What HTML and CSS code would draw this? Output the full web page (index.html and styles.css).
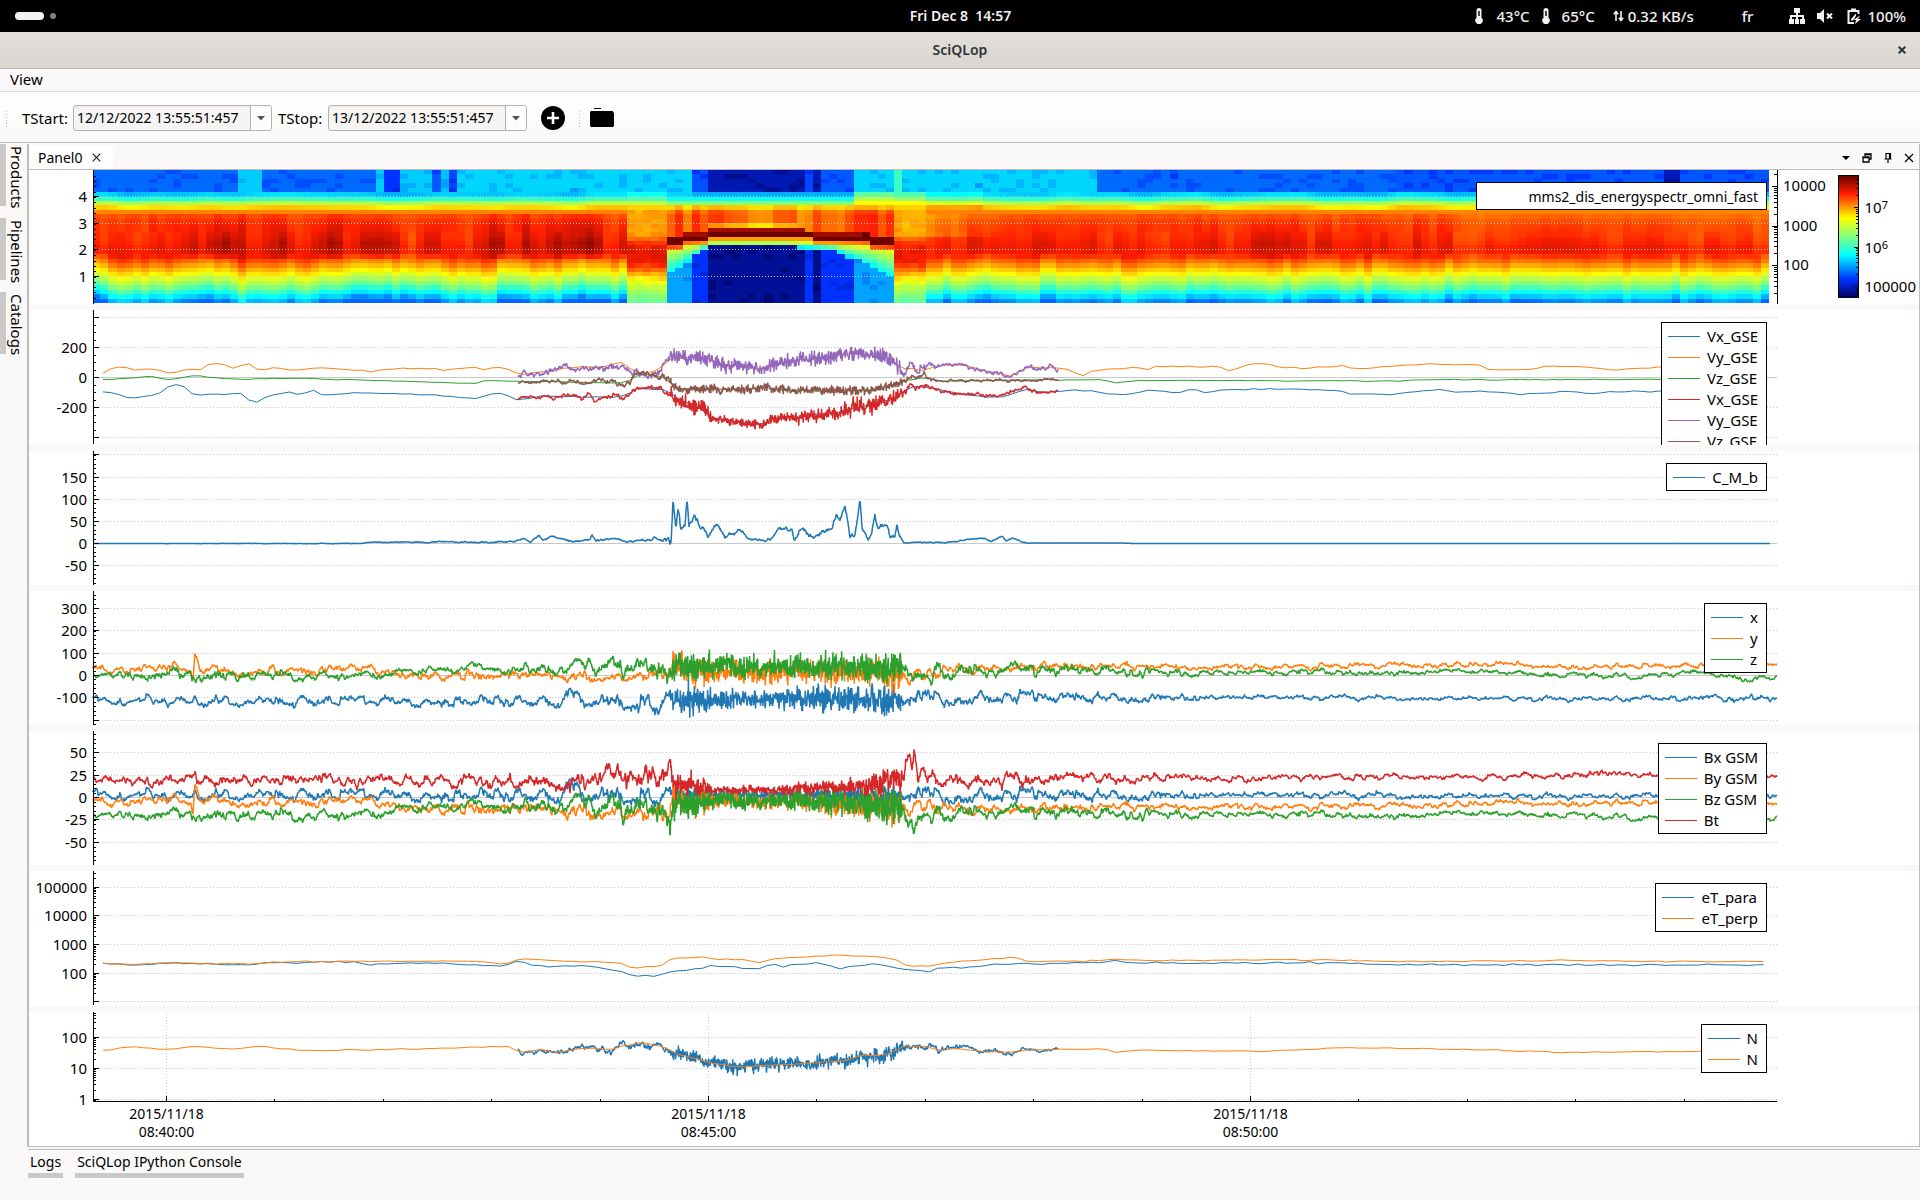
FILE: index.html
```html
<!DOCTYPE html>
<html lang="en">
<head>
<meta charset="utf-8">
<title>SciQLop</title>
<link rel="stylesheet" href="styles.css">
</head>
<body>
<header class="topbar">
  <div class="workspaces"><span class="pill"></span><span class="dot"></span></div>
  <time class="clock">Fri Dec 8&nbsp; 14:57</time>
  <div class="tray">
    <svg class="thermo" width="8" height="16" viewBox="0 0 8 16"><path d="M1.5 2.5a2.5 2.5 0 0 1 5 0v7.3a3.7 3.7 0 1 1-5 0z" fill="#f2f2f2"/><path d="M4 3v5" stroke="#000" stroke-width="1.4"/></svg>
    <span class="temp">43°C</span>
    <svg class="thermo" width="8" height="16" viewBox="0 0 8 16"><path d="M1.5 2.5a2.5 2.5 0 0 1 5 0v7.3a3.7 3.7 0 1 1-5 0z" fill="#f2f2f2"/><path d="M4 3v5" stroke="#000" stroke-width="1.4"/></svg>
    <span class="temp">65°C</span>
    <span class="net"><svg width="11" height="12" viewBox="0 0 11 12"><path d="M3 11V2M.8 4.2L3 1.5l2.2 2.7M8 1v9M5.800 7.800L8 10.500l2.200-2.700" fill="none" stroke="#f2f2f2" stroke-width="1.600"/></svg>0.32 KB/s</span>
    <span class="lang">fr</span>
    <svg class="lan" width="16" height="16" viewBox="0 0 16 16"><path d="M5 0h6v5H9v2h6v4h1v5h-5v-5h2V9H9v2h1v5H6v-5h1V9H3v2h2v5H0v-5h1V7h6V5H5z" fill="#f2f2f2"/></svg>
    <svg class="mute" width="16" height="14" viewBox="0 0 16 14"><path d="M0 4h3l4-4v14l-4-4H0z" fill="#f2f2f2"/><path d="M10 4.500l5 5m0-5l-5 5" stroke="#f2f2f2" stroke-width="2"/></svg>
    <svg class="battery" width="14" height="16" viewBox="0 0 14 16"><path d="M11.500 6V3h-10v12H7M4 1.500h5" fill="none" stroke="#f2f2f2" stroke-width="2"/><path d="M4 11l5-5.500V8l-3 4.500H4zM13 7.500L6.500 12H9l-1 4 6-5h-3z" fill="#f2f2f2"/></svg>
    <span>100%</span>
  </div>
</header>
<div class="titlebar">
  <h1>SciQLop</h1>
  <button class="close" aria-label="Close"><svg width="8" height="8" viewBox="0 0 8 8"><path d="M.7.700l6.600 6.600m0-6.600L.7 7.300" stroke="#2e3436" stroke-width="2"/></svg></button>
</div>
<nav class="menubar"><button>View</button></nav>
<div class="toolbar">
  <span class="grip"></span>
  <label for="tstart">TStart:</label>
  <div class="combo"><input id="tstart" type="text" value="12/12/2022 13:55:51:457"><button aria-label="Open calendar"><svg width="8" height="5" viewBox="0 0 8 5"><path d="M0 0h8L4 4.500z" fill="#555"/></svg></button></div>
  <label for="tstop">TStop:</label>
  <div class="combo"><input id="tstop" type="text" value="13/12/2022 13:55:51:457"><button aria-label="Open calendar"><svg width="8" height="5" viewBox="0 0 8 5"><path d="M0 0h8L4 4.500z" fill="#555"/></svg></button></div>
  <button class="tool add" aria-label="Add"><svg width="24" height="24" viewBox="0 0 24 24"><circle cx="12" cy="12" r="12"/><path d="M12 6v12M6 12h12" stroke="#fff" stroke-width="2.600"/></svg></button>
  <span class="grip"></span>
  <button class="tool" aria-label="Open"><svg width="24" height="20" viewBox="0 0 24 20"><path d="M4 0h7v1H4zM1 3h22v1l1 1v13l-1 1H1l-1-1V4z"/></svg></button>
</div>
<main class="workspace">
  <aside class="sidetabs"><button>Products</button><button>Pipelines</button><button>Catalogs</button></aside>
  <section class="dock">
    <div class="tabs">
      <div class="tab"><span>Panel0</span><button aria-label="Close tab"><svg width="9" height="9" viewBox="0 0 9 9"><path d="M.7.700l7.600 7.600m0-7.600L.7 8.300" stroke="#222" stroke-width="1.200"/></svg></button></div>
      <div class="dockbuttons">
        <button aria-label="Tabs menu"><svg width="10" height="10" viewBox="0 0 10 10"><path d="M1 3h8L5 7z"/></svg></button>
        <button aria-label="Detach"><svg width="10" height="10" viewBox="0 0 10 10"><path d="M3 3V1h6v5H7M1 4h6v5H1zM3 1.500h6M1 4.500h6" fill="none" stroke="#000" stroke-width="1.300"/></svg></button>
        <button aria-label="Pin"><svg width="10" height="10" viewBox="0 0 10 10"><path d="M3 .5h4.500v5.500M3 0v6M6.500 0v6M1.500 6h7M5 6v4" fill="none" stroke="#000" stroke-width="1.200"/></svg></button>
        <button aria-label="Close panel"><svg width="10" height="10" viewBox="0 0 10 10"><path d="M1 1l8 8m0-8L1 9" stroke="#000" stroke-width="1.200"/></svg></button>
      </div>
    </div>
    <div class="plots">
      <div class="plot" data-plot="spectro"><ul class="legend nokey"><li>mms2_dis_energyspectr_omni_fast</li></ul></div>
      <div class="plot" data-plot="velocity"><ul class="legend"><li class="c1">Vx_GSE</li><li class="c2">Vy_GSE</li><li class="c3">Vz_GSE</li><li class="c4">Vx_GSE</li><li class="c5">Vy_GSE</li><li class="c6">Vz_GSE</li></ul></div>
      <div class="plot" data-plot="cmb"><ul class="legend"><li class="c1">C_M_b</li></ul></div>
      <div class="plot" data-plot="xyz"><ul class="legend"><li class="c1">x</li><li class="c2">y</li><li class="c3">z</li></ul></div>
      <div class="plot" data-plot="gsm"><ul class="legend"><li class="c1">Bx GSM</li><li class="c2">By GSM</li><li class="c3">Bz GSM</li><li class="c4">Bt</li></ul></div>
      <div class="plot" data-plot="temp"><ul class="legend"><li class="c1">eT_para</li><li class="c2">eT_perp</li></ul></div>
      <div class="plot" data-plot="density"><ul class="legend"><li class="c1">N</li><li class="c2">N</li></ul></div>
    </div>
  </section>
</main>
<footer class="bottomtabs"><button>Logs</button><button>SciQLop IPython Console</button></footer>
<script src="plots.js"></script>
</body>
</html>
```
FILE: styles.css
```css
* { box-sizing: border-box; }
body {
  margin: 0;
  min-height: 100vh;
  display: flex;
  flex-direction: column;
  background: #faf9f7;
  color: #000;
  font: 15px/20px "Noto Sans", "Open Sans", sans-serif;
}
button { border: 0; padding: 0; background: none; font: inherit; color: inherit; }
svg { display: block; flex: none; }

.topbar {
  display: grid;
  grid-template-columns: 1fr auto 1fr;
  align-items: center;
  height: 32px;
  padding: 0 14px 0 15px;
  background: #000;
  color: #f2f2f2;
  font-weight: 500;
}
.clock { font-weight: 600; font-size: 14px; }
.workspaces { display: flex; align-items: center; gap: 6px; }
.pill { width: 29px; height: 8px; border-radius: 4px; background: #f2f2f2; }
.dot { width: 6px; height: 6px; border-radius: 3px; background: #808080; }
.tray { display: flex; align-items: center; justify-content: flex-end; }
.temp { margin: 0 12px; }
.net { display: flex; align-items: center; gap: 4px; margin: 0 48px 0 6px; }
.lang { margin-right: 36px; }
.lan { margin-right: 12px; }
.mute { margin-right: 14px; }
.battery { margin-right: 6px; }
.thermo:first-child { margin-right: 2px; }

.titlebar {
  display: grid;
  grid-template-columns: 1fr auto 1fr;
  align-items: center;
  height: 37px;
  padding: 0 14px;
  background: linear-gradient(#e1dedb, #d9d6d2);
  border-bottom: 1px solid #bfb8b1;
}
.titlebar h1 { grid-column: 2; margin: 0; font-size: 14px; line-height: 20px; font-weight: 600; color: #2e3436; }
.close { justify-self: end; }

.menubar { display: flex; align-items: flex-start; height: 23px; padding: 0 10px; border-bottom: 1px solid #dcdcdb; }
.toolbar {
  display: flex;
  align-items: center;
  height: 51px;
  padding: 2px 5px 0;
  background: linear-gradient(#fff, #faf9f8);
  border-bottom: 1px solid #bdbbb9;
}
.grip { width: 4px; height: 17px; margin-right: 13px; background: radial-gradient(circle, #bbb 1px, transparent 1px) 0 0 / 3px 3px; }
.toolbar label { width: 51px; }
.combo { display: flex; width: 199px; height: 26px; margin-right: 6px; border: 1px solid #b4b2b0; border-radius: 3px; background: linear-gradient(#efeeed, #f6f5f4 4px); }
.combo + label { width: 50px; }
.combo input { flex: 1; min-width: 0; padding: 0 3px; border: 0; background: none; font: inherit; font-size: 14px; }
.combo button { display: grid; place-items: center; width: 21px; border-left: 1px solid #b4b2b0; background: #fdfdfd; border-radius: 0 3px 3px 0; }
.tool { margin-right: 13px; }
.add { margin-left: 8px; }
.tool + .grip { margin-right: 8px; }

.workspace { flex: 1; display: flex; margin-top: 1px; }
.sidetabs { display: flex; flex-direction: column; align-items: stretch; width: 27px; gap: 12px; }
.sidetabs button {
  writing-mode: vertical-rl;
  height: 62px;
  padding-top: 2px;
  border-left: 6px solid #cac9c7;
  line-height: 16px;
  text-align: center;
  white-space: nowrap;
}
.dock { flex: 1; display: flex; flex-direction: column; margin-bottom: 2px; border: solid #bfbdbb; border-width: 0 1px 1px 2px; }
.tabs { display: flex; justify-content: space-between; align-items: center; height: 26px; padding-top: 2px; border-bottom: 1px solid #bfbdbb; }
.tab { display: flex; align-items: center; gap: 9px; width: 84px; height: 23px; padding-left: 9px; background: #fff; font-size: 14px; }
.dockbuttons { display: flex; gap: 11px; padding-right: 5px; }
.plots { flex: 1; display: flex; flex-direction: column; gap: 6px; min-height: 700px; }
.plot { position: relative; flex: 1; overflow: hidden; background: #fff; }
.plot > svg { position: absolute; inset: 0; width: 100%; height: 100%; }
.plot text { font-size: 15px; }
.plot .date { font-size: 14px; }
.plot .sup { font-size: 11px; }
.grid { stroke: #c8c8c8; stroke-dasharray: 1 2; fill: none; }
.zero { stroke: #c8c8c8; fill: none; }
.axis { stroke: #000; fill: none; }
.curve { fill: none; stroke-linejoin: bevel; }

.legend {
  position: absolute;
  z-index: 1;
  top: 12px;
  right: 152px;
  margin: 0;
  padding: 3px 8px 2px 6px;
  border: 1px solid #000;
  background: #fff;
  list-style: none;
}
.legend li { display: flex; align-items: center; gap: 7px; line-height: 21px; white-space: nowrap; }
.legend li::before { content: ""; width: 32px; border-top: 1px solid var(--key); }
.nokey li { font-size: 14px; }
.nokey li::before { width: 38px; visibility: hidden; }
.c1 { --key: #1f77b4; }
.c2 { --key: #ff7f0e; }
.c3 { --key: #2ca02c; }
.c4 { --key: #d62728; }
.c5 { --key: #9467bd; }
.c6 { --key: #8c564b; }

.bottomtabs { display: flex; align-items: flex-start; gap: 12px; height: 51px; margin-left: 28px; border-top: 1px solid #bfbdbb; }
.bottomtabs button { height: 28px; padding: 0 2px; border-bottom: 5px solid #cac9c7; font-size: 14px; line-height: 20px; }
```
FILE: plots.js
```js
const NS = "http://www.w3.org/2000/svg";
const BLUE = "#1f77b4", ORANGE = "#ff7f0e", GREEN = "#2ca02c", RED = "#d62728", PURPLE = "#9467bd", BROWN = "#8c564b";

// Plot area, relative to a row: left axis and the room kept for the colour scale.
const LEFT = 64, RIGHT = 142, SPAN = 1684, ROW = 134;
// Series are sampled on a time base that runs from T0 to T0 + SPAN.
const T0 = 93;

function rng(seed) {
  let s = seed >>> 0;
  return () => {
    s = (s + 0x6d2b79f5) >>> 0;
    let t = Math.imul(s ^ (s >>> 15), 1 | s);
    t = (t + Math.imul(t ^ (t >>> 7), 61 | t)) ^ t;
    return ((t ^ (t >>> 14)) >>> 0) / 4294967296;
  };
}
function at(k, x) {
  if (x <= k[0]) return k[1];
  for (let i = 2; i < k.length; i += 2)
    if (x <= k[i]) return k[i - 1] + (k[i + 1] - k[i - 1]) * (x - k[i - 2]) / (k[i] - k[i - 2]);
  return k[k.length - 1];
}
function slow(seed, period) {
  const r = rng(seed), v = [];
  for (let i = 0; i < 2200 / period + 2; i++) v.push(r() * 2 - 1);
  return x => {
    const p = x / period, i = Math.floor(p), f = p - i, e = f * f * (3 - 2 * f);
    return v[i] * (1 - e) + v[i + 1] * e;
  };
}
function el(parent, name, attrs, text) {
  const e = document.createElementNS(NS, name);
  for (const k in attrs) e.setAttribute(k, attrs[k]);
  if (text !== undefined) e.textContent = text;
  parent.appendChild(e);
  return e;
}

const vx = [104,-95,120,-115,128,-135,140,-135,160,-100,170,-55,176,-50,185,-60,193,-115,225,-110,240,-105,250,-160,258,-162,265,-130,290,-95,300,-120,315,-85,323,-120,350,-100,420,-115,440,-120,478,-140,495,-105,505,-115,519,-150,540,-125,600,-130,620,-130,640,-70,665,-80,680,-150,705,-220,712,-275,760,-315,775,-275,830,-240,850,-210,890,-150,908,-70,920,-60,960,-110,1000,-135,1025,-75,1040,-100,1080,-85,1120,-115,1137,-108,1150,-85,1180,-100,1194,-70,1202,-100,1230,-80,1265,-75,1340,-85,1350,-110,1390,-115,1438,-80,1460,-105,1475,-90,1520,-110,1570,-90,1590,-110,1610,-95,1661,-90,1777,-95];
const vy = [104,30,115,70,122,75,136,50,150,60,170,30,185,50,200,50,210,95,226,80,234,55,243,90,251,90,259,40,275,65,298,45,323,70,345,55,372,38,398,60,425,60,447,50,470,72,486,48,495,68,505,65,519,20,530,25,550,45,570,65,600,70,622,100,634,40,650,30,660,60,672,130,706,130,720,90,760,60,790,110,850,155,885,145,901,65,925,50,940,85,965,80,990,40,1010,10,1025,65,1055,68,1072,45,1080,5,1088,40,1105,55,1130,60,1137,80,1145,40,1153,75,1220,72,1227,45,1250,90,1268,92,1282,62,1330,65,1341,80,1355,55,1420,90,1479,85,1487,52,1535,55,1545,78,1590,70,1610,50,1661,70,1777,70];
const vz = [104,-12,115,-14,135,0,150,10,170,-15,193,10,240,-10,300,-5,350,-15,400,-25,478,-40,486,-20,520,-25,600,-35,625,-35,640,20,660,15,680,-80,750,-78,765,-60,775,-85,850,-90,880,-80,905,-20,925,0,940,-25,1040,-15,1105,-15,1113,-35,1140,-20,1250,-20,1390,-25,1430,-15,1777,-12];
const cmb = [94,0,360,0,370,3,505,3,515,6,524,12,530,5,539,17,543,6,550,15,560,10,570,5,590,8,592,18,596,5,610,8,618,12,625,4,650,6,655,13,662,4,668,12,671,5,673,103,676,40,678,75,681,38,685,45,687,98,689,40,694,60,697,55,700,35,702,42,708,22,717,40,725,16,735,22,739,30,750,12,765,7,774,14,778,32,792,33,794,12,801,33,812,18,832,34,836,58,840,50,845,83,850,20,855,22,860,92,862,35,868,13,872,25,875,60,877,33,888,40,890,15,895,20,897,45,899,22,904,2,955,3,968,10,985,12,992,4,1002,16,1006,5,1013,12,1028,1,1120,1,1140,0,1777,0];
const tPara = [104,2.36,130,2.3,170,2.35,250,2.32,275,2.38,350,2.42,372,2.3,420,2.4,500,2.25,519,2.42,540,2.25,590,2.25,620,2.1,633,1.92,657,1.9,672,2.1,700,2.15,714,2.3,722,2.22,730,2.28,740,2.18,762,2.2,772,2.36,787,2.2,795,2.4,804,2.22,812,2.38,830,2.3,844,2.12,852,2.34,860,2.18,870,2.38,900,2.15,920,2.1,926,2,935,2.18,975,2.22,990,2.32,1100,2.38,1113,2.46,1125,2.38,1145,2.35,1300,2.38,1420,2.3,1770,2.3];
const tPerp = [104,2.36,130,2.3,170,2.37,250,2.33,275,2.4,350,2.43,480,2.43,505,2.32,519,2.52,550,2.45,600,2.4,622,2.37,633,2.17,665,2.3,672,2.54,705,2.58,720,2.48,740,2.5,762,2.37,771,2.52,840,2.65,890,2.56,908,2.26,930,2.27,940,2.35,985,2.5,1015,2.58,1030,2.4,1100,2.45,1113,2.52,1125,2.46,1190,2.46,1280,2.48,1420,2.42,1560,2.46,1620,2.42,1770,2.42];
const dens = [104,1.6,130,1.7,170,1.62,193,1.7,235,1.63,258,1.73,300,1.58,420,1.63,490,1.7,510,1.7,520,1.52,540,1.6,560,1.52,580,1.65,610,1.62,640,1.85,665,1.7,675,1.5,708,1.2,738,1.05,800,1.15,845,1.25,862,1.43,870,1.38,893,1.5,901,1.72,925,1.72,940,1.57,955,1.65,985,1.55,1015,1.52,1025,1.6,1105,1.64,1113,1.53,1140,1.6,1250,1.55,1340,1.66,1420,1.65,1560,1.53,1690,1.54,1710,1.6,1770,1.6];

// base: value keys, amp: noise keys, rough: share of sample-to-sample noise.
const fine = (color, base, amp, seed, rough = [0, .45]) => ({ color, base, amp, seed, rough, from: 93, to: 1777, step: .35, w: 1.5, gain: 1.3 });
const burst = (color, base, amp, seed) => ({ color, base, amp, seed, rough: [518, .55, 665, .65, 672, 1, 900, 1, 910, .6], from: 518, to: 1058, step: .4, w: 1.4, gain: 1.25 });
const thin = (color, base, amp, seed) => ({ color, base, amp: [0, amp], seed, rough: [0, .5], from: 103, to: 1768, step: 8.1, w: 1, gain: 1 });
const turb = [0, .5, 668, .5, 674, 1, 900, 1, 906, .5];

const PLOTS = {
  velocity: {
    ticks: [[7, ""], [37, "200"], [67, "0"], [97, "-200"], [127, ""]], minor: 7.5, zero: 67, y: v => 67 - v * .15,
    series: [thin(BLUE, vx, 8, 1), thin(ORANGE, vy, 8, 2), thin(GREEN, vz, 5, 3),
      burst(PURPLE, vy, [518, 34, 640, 45, 665, 50, 675, 65, 720, 58, 760, 42, 850, 70, 900, 60, 925, 60, 935, 24, 1000, 24, 1058, 30], 15),
      burst(BROWN, vz, [518, 18, 640, 40, 665, 45, 680, 36, 900, 38, 930, 40, 940, 13, 1058, 18], 16),
      burst(RED, vx, [518, 22, 640, 34, 672, 45, 690, 80, 708, 70, 714, 32, 770, 42, 820, 58, 860, 75, 900, 52, 940, 24, 1058, 24], 14)]
  },
  cmb: {
    ticks: [[3, ""], [26, "150"], [48, "100"], [70, "50"], [92, "0"], [114, "-50"]], minor: 4.4, zero: 92, y: v => 92 - v * .44,
    series: [{ ...fine(BLUE, cmb, [94, .3, 360, 1, 500, 3, 660, 5, 672, 16, 720, 9, 760, 4, 800, 9, 895, 10, 905, 2, 1020, 3, 1030, .3], 21, [0, .7]), to: 1770 }]
  },
  xyz: {
    ticks: [[17, "300"], [39, "200"], [62, "100"], [84, "0"], [106, "-100"], [129, ""]], minor: 4.45, zero: 84, y: v => 84 - v * .223,
    series: [
      fine(BLUE, [93,-112,210,-112,240,-130,260,-112,520,-112,660,-115,680,-103,900,-105,960,-97,1777,-103], [93,20,200,26,450,30,600,42,668,60,674,76,704,76,712,46,770,46,790,62,900,74,906,50,950,36,1090,32,1200,18,1400,13,1560,15,1777,18], 31, turb),
      fine(ORANGE, [93,30,191,30,193,-20,195,110,200,20,370,30,385,0,620,-5,674,20,880,15,890,-5,930,-10,940,15,960,30,1050,45,1200,38,1370,42,1500,50,1590,38,1777,50], [93,22,190,26,260,28,600,28,668,45,674,72,704,72,712,55,860,60,900,75,906,45,950,28,1200,18,1777,14], 32, turb),
      fine(GREEN, [93,0,370,0,400,20,462,25,473,65,485,30,560,20,580,40,640,20,668,0,674,38,900,35,912,5,930,-15,935,20,1100,22,1180,12,1430,15,1500,15,1560,0,1640,-5,1690,10,1735,2,1750,-28,1760,-8,1777,-8], [93,22,190,36,260,26,450,22,580,40,620,54,674,72,704,72,712,60,900,66,906,58,950,42,1080,34,1200,18,1777,14], 33, turb)]
  },
  gsm: {
    ticks: [[21, "50"], [44, "25"], [66, "0"], [88, "-25"], [111, "-50"]], minor: 4.5, zero: 66, y: v => 66 - v * .895,
    series: [
      fine(BLUE, [93,3,210,3,240,-1,260,4,900,3,1777,2], [93,6,450,9,600,13,674,13,710,8,780,7,900,12,950,10,1100,9,1200,5,1777,4], 31, turb),
      fine(ORANGE, [93,-4,191,-4,193,-18,195,18,200,-4,370,-4,385,-12,600,-15,668,-15,674,-8,710,-4,780,-4,890,-12,950,-13,1100,-10,1400,-10,1500,-6,1777,-7], [93,6,450,8,600,11,674,18,704,16,712,9,780,9,850,14,900,20,906,11,950,8,1200,5,1777,4], 32, turb),
      fine(GREEN, [93,-20,370,-19,400,-11,462,-11,473,0,485,-10,560,-12,580,-7,600,-13,640,-18,668,-22,670,-40,672,-10,712,-4,800,-4,890,-9,904,-16,906,-30,912,-24,914,-36,918,-24,930,-20,960,-16,1100,-18,1400,-20,1500,-18,1640,-23,1777,-23], [93,6,190,8,450,7,590,13,620,19,674,19,704,17,712,11,780,13,900,20,920,14,950,10,1100,9,1200,5,1777,4], 33, turb),
      fine(RED, [93,20,191,20,195,28,197,12,200,20,560,18,600,22,650,28,668,28,670,45,673,16,704,12,712,8,780,8,880,15,895,20,904,18,906,38,912,32,914,50,918,28,960,20,1100,20,1250,22,1400,24,1500,22,1620,26,1777,24], [93,6,190,8,450,8,590,14,620,19,670,21,674,16,704,14,712,5,780,6,850,10,890,18,904,15,930,13,960,10,1100,8,1200,5,1777,4], 34, turb)]
  },
  temp: {
    ticks: [[16, "100000"], [44, "10000"], [73, "1000"], [102, "100"], [130, ""]], decade: 28.6, y: v => 102 - (v - 2) * 28.6,
    series: [thin(BLUE, tPara, .05, 51), thin(ORANGE, tPerp, .035, 52)]
  },
  density: {
    ticks: [[25, "100"], [56, "10"], [87, "1"]], decade: 31, y: v => 56 - (v - 1) * 31, time: true,
    series: [burst(BLUE, dens, [518, .15, 600, .17, 672, .26, 850, .27, 900, .3, 935, .18, 1058, .08], 61), thin(ORANGE, dens, .03, 62)]
  },
  spectro: {
    ticks: [[26, "4"], [53, "3"], [79, "2"], [106, "1"]], minor: 5.3, spectro: true, series: []
  }
};

function samples(s) {
  if (s.pts) return s.pts;
  const r = rng(s.seed * 7919), a = slow(s.seed * 31 + 5, 7), b = slow(s.seed * 53 + 9, 3), c = slow(s.seed * 17 + 3, 1.2), out = [];
  for (let x = s.from; x <= s.to; x += s.step) {
    const k = at(s.rough, x), u = r() + r() + r() - 1.5;
    const smooth = (a(x) * .5 + b(x) * .35 + c(x) * .3) * (1 - k * .55) * (k > .9 ? .5 : 1.3);
    out.push([x, at(s.base, x) + at(s.amp, x) * s.gain * (smooth + u * (k > .9 ? .68 : k * .35))]);
  }
  return (s.pts = out);
}

const JET = [[0, 0, 0, 100], [.15, 0, 50, 255], [.35, 0, 255, 255], [.65, 255, 255, 0], [.85, 255, 30, 0], [1, 100, 0, 0]];
function jet(v) {
  v = Math.min(1, Math.max(0, v));
  for (let i = 1; i < JET.length; i++) if (v <= JET[i][0]) {
    const p = JET[i - 1], q = JET[i], f = (v - p[0]) / (q[0] - p[0]);
    return `rgb(${[1, 2, 3].map(n => Math.round(p[n] + (q[n] - p[n]) * f))})`;
  }
}
// Background level of the highest energies: start of each interval and its level.
const SKY = [[0, .205], [238, .3], [262, .205], [375, .3], [383, .15], [399, .3], [432, .19], [440, .29], [448, .17], [456, .31], [691, .18], [707, .075], [804, .17], [812, .08], [820, .19], [853, .31], [893, .42], [901, .31], [1096, .205], [1400, .185], [1663, .08], [1679, .185]];
const PIT = [[0, .26], [691, .15], [707, .05], [804, .15], [812, .04], [820, .15], [853, .26]];
const level = (t, x) => t.reduce((v, e) => x >= e[0] ? e[1] : v, 0);
const BODY = [26, .3, 31, .48, 36, .64, 40, .74, 46, .8, 54, .83, 66, .845, 74, .865, 84, .865, 88, .82, 93, .77, 98, .715, 103, .665, 108, .6, 113, .54, 118, .46, 123, .37, 128, .3, 133, .2];
const FLANK = [26, .36, 31, .5, 36, .66, 40, .73, 64, .74, 74, .84, 80, .88, 92, .87, 100, .78, 106, .7, 112, .64, 118, .57, 133, .46];
const ARC = [660, 71, 680, 69, 700, 65, 712, 63, 780, 63, 812, 64, 850, 67, 875, 69, 893, 73];
const shiftA = slow(77, 24), shiftB = slow(78, 9), heat = slow(79, 16), heatB = slow(80, 8), heatC = slow(86, 8), calmA = slow(84, 26);

function cell(x, y, r) {
  if (y < 22) {
    const s = level(SKY, x);
    return s + (r() < .22 ? -.03 : 0) - (r() < .03 ? .03 : 0);
  }
  if (x >= 666 && x < 893) {
    const c = at(ARC, x), floor = level(PIT, x);
    const flank = x < 706 ? (706 - x) / 40 : Math.max(0, (x - 835) / 58);
    const hump = x > 853 ? .1 : 0;
    if (y < 27) return Math.max(level(SKY, x), .27) + hump * 1.5;
    if (y < 31) return .36 + hump * 2;
    if (y < 36) return .5 + hump * 1.5;
    if (y < 40) return .7 + heatB(x) * .03;
    if (y < c - 4) return .785 + heatB(x) * .05 + (y > 44 ? Math.abs(x - 780) / 110 * .03 : 0) + (y > c - 9 && x > 705 && x < 800 ? -.08 : 0);
    if (y < c + 4.5) return y < c && flank < .5 ? .94 : .99;
    if (y < c + 9) return .74 + flank * .08;
    const d = y - c - 9, reach = 5 + flank * 22;
    return d > reach ? floor + (r() < .14 ? -.03 : 0) : .62 - (d / reach) * (.62 - .33);
  }
  const flank = (x >= 626 && x < 666) || (x >= 893 && x < 926);
  if (flank) return at(FLANK, y) + (y > 38 ? heatB(x) * .02 + (r() - .5) * .03 : 0) + (x > 893 && y < 36 ? .08 : 0);
  const calm = x < 640 ? 1 : .7, shift = shiftA(x) * 3 * calm + shiftB(x) * 4 * calm;
  const yy = y > 70 ? y - shift * Math.min(1, (y - 70) / 20) : y;
  let v = at(BODY, yy);
  if (y > 44 && y < 88) {
    const mid = Math.max(0, 1 - Math.abs(y - 72) / 22), high = y < 62 ? heatC(x) * .02 : 0;
    v += (x < 626 ? .015 : x > 1450 ? -.01 : 0) + (heatB(x) * (.012 + mid * .04) + high + heat(x) * (.008 + mid * .035)) * calm;
    if (x > 926 && x < 1000) v -= (1000 - x) / 74 * (y < 66 ? .07 : 0);
    if (x > 1450 && y < 74) v -= .01;
  }
  if (y < 40) v += calmA(x) * .03 + (x > 640 && x < 980 ? .05 : 0);
  return v;
}

function draw(host) {
  const p = PLOTS[host.dataset.plot];
  const old = host.querySelector("svg");
  if (old) old.remove();
  const W = Math.round(host.clientWidth), H = Math.round(host.clientHeight);
  const svg = el(host, "svg", { "aria-hidden": "true" });
  const right = W - RIGHT, kx = (right - LEFT) / SPAN, ky = H / ROW;
  const X = t => LEFT + (t - T0) * kx, Y = y => Math.round(y * ky);
  const bottom = p.time ? Y(89) : H;

  if (p.spectro) {
    // Spectra are 8.1 units apart; the first one is cut by the axis.
    const r = rng(99), n = 207, m = 30, g = el(svg, "g", { "shape-rendering": "crispEdges" });
    const edge = i => i === 0 ? 94 : 100.3 + 8.1 * (i - 1);
    const edgeX = i => Math.round(X(edge(i))), edgeY = j => Math.round((H - 1) * j / m);
    for (let i = 0; i < n; i++) for (let j = 0; j < m; j++) {
      const v = cell((edge(i) + edge(i + 1)) / 2, 133 * (j + .5) / m, r);
      el(g, "rect", { x: edgeX(i), y: edgeY(j), width: edgeX(i + 1) - edgeX(i), height: edgeY(j + 1) - edgeY(j), fill: jet(v) });
    }
  }
  let grid = "", axis = `M${LEFT + .5} 0V${bottom}`;
  for (const [y, label] of p.ticks) {
    const yy = Y(y) + .5;
    if (y !== p.zero) grid += `M${LEFT + 6} ${yy}H${right}`;
    axis += `M${LEFT} ${yy}h6`;
    if (label) el(svg, "text", { x: LEFT - 6, y: yy + 5, "text-anchor": "end" }, label);
  }
  if (p.minor) {
    const z = p.zero || 106.5;
    for (let i = -40; i < 40; i++) {
      const y = z + i * p.minor;
      if (y > 1 && y < 133) axis += `M${LEFT} ${Y(y) + .5}h3`;
    }
  }
  if (p.decade) for (let d = -1; d < 5; d++) for (let k = 2; k < 10; k++) {
    const y = p.ticks[0][0] + d * p.decade - Math.log10(k) * p.decade;
    if (y > 0 && Y(y) < bottom) axis += `M${LEFT} ${Y(y) + .5}h3`;
  }
  if (p.time) {
    axis += `M${LEFT} ${bottom + .5}H${right}`;
    for (let i = -1; i < 15; i++) {
      const x = Math.round(X(166 + i * 108.4)) + .5;
      if (x < LEFT || x > right) continue;
      axis += `M${x} ${bottom}v${i % 5 ? -2 : -5}`;
      if (i % 5 === 0) {
        grid += `M${x} 2V${bottom}`;
        el(svg, "text", { x, y: bottom + 18, "text-anchor": "middle", class: "date" }, "2015/11/18");
        el(svg, "text", { x, y: bottom + 36, "text-anchor": "middle", class: "date" }, `08:${40 + i}:00`);
      }
    }
  }
  el(svg, "path", { d: grid, class: "grid" });
  if (p.zero) el(svg, "path", { d: `M${LEFT} ${Y(p.zero) + .5}H${right}`, class: "zero" });
  for (const s of p.series) {
    const d = samples(s).map(q => X(q[0]).toFixed(1) + "," + (p.y(q[1]) * ky + .5).toFixed(1)).join(" ");
    el(svg, "polyline", { points: d, class: "curve", stroke: s.color, "stroke-width": s.w });
  }
  if (p.spectro) {
    axis += `M${right + .5} 0V${H}`;
    [[16, "10000"], [56, "1000"], [95, "100"]].forEach(([y, t]) => {
      axis += `M${right} ${Y(y) + .5}h-5`;
      el(svg, "text", { x: right + 6, y: Y(y) + 5 }, t);
    });
    for (let d = 0; d < 5; d++) for (let k = 2; k < 10; k++) {
      const y = 16 - 39.5 + d * 39.5 + (1 - Math.log10(k)) * 39.5;
      if (y > 0 && y < 133) axis += `M${right} ${Y(y) + .5}h-3`;
    }
    const grad = el(el(svg, "defs", {}), "linearGradient", { id: "jet", x1: 0, y1: 1, x2: 0, y2: 0 });
    for (const [o, ...c] of JET) el(grad, "stop", { offset: o, "stop-color": `rgb(${c})` });
    const bx = right + 61.5;
    el(svg, "rect", { x: bx, y: 5.5, width: 20, height: H - 12, fill: "url(#jet)", stroke: "#000" });
    [[37, "10", "7"], [77, "10", "6"], [116, "100000", ""]].forEach(([y, t, sup]) => {
      axis += `M${bx + 20} ${Y(y) + .5}h-5`;
      const e = el(svg, "text", { x: bx + 26, y: Y(y) + 6 }, t);
      if (sup) el(e, "tspan", { dy: -4, class: "sup" }, sup);
    });
    for (let d = 0; d < 5; d++) for (let k = 2; k < 10; k++) {
      const y = 37 - 39.5 + d * 39.5 + (1 - Math.log10(k)) * 39.5;
      if (y > 7 && y < 127) axis += `M${bx + 20} ${Y(y) + .5}h-3`;
    }
  }
  el(svg, "path", { d: axis, class: "axis", "shape-rendering": "crispEdges" });
}

const drawAll = () => document.querySelectorAll(".plot").forEach(draw);
drawAll();
window.addEventListener("resize", drawAll);
```
